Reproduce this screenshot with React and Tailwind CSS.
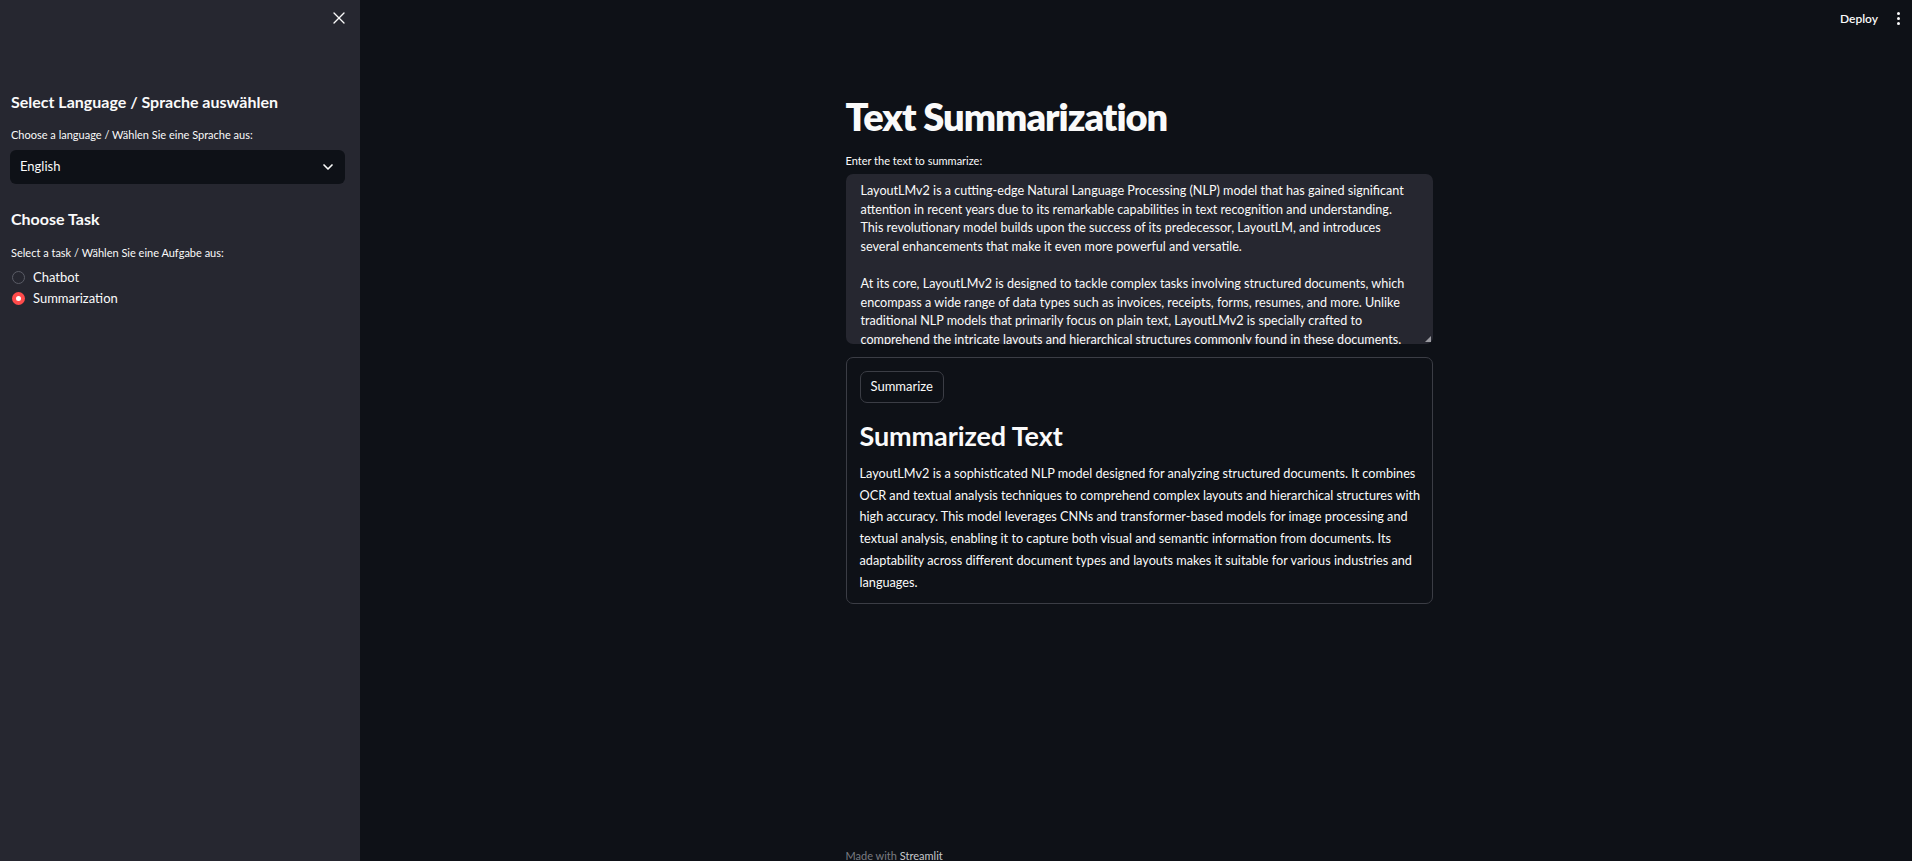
import React from "react";
import { X, ChevronDown } from "lucide-react";

const FONT = { fontFamily: "Lato, 'Noto Sans', sans-serif" };

const inputLines = [
  "LayoutLMv2 is a cutting-edge Natural Language Processing (NLP) model that has gained significant",
  "attention in recent years due to its remarkable capabilities in text recognition and understanding.",
  "This revolutionary model builds upon the success of its predecessor, LayoutLM, and introduces",
  "several enhancements that make it even more powerful and versatile.",
  "",
  "At its core, LayoutLMv2 is designed to tackle complex tasks involving structured documents, which",
  "encompass a wide range of data types such as invoices, receipts, forms, resumes, and more. Unlike",
  "traditional NLP models that primarily focus on plain text, LayoutLMv2 is specially crafted to",
  "comprehend the intricate layouts and hierarchical structures commonly found in these documents.",
];

const summaryLines = [
  "LayoutLMv2 is a sophisticated NLP model designed for analyzing structured documents. It combines",
  "OCR and textual analysis techniques to comprehend complex layouts and hierarchical structures with",
  "high accuracy. This model leverages CNNs and transformer-based models for image processing and",
  "textual analysis, enabling it to capture both visual and semantic information from documents. Its",
  "adaptability across different document types and layouts makes it suitable for various industries and",
  "languages.",
];

function Radio({ checked, label }) {
  return (
    <div className="flex items-center h-[21px]">
      {checked ? (
        <span className="w-[13px] h-[13px] rounded-full bg-[#ff4b4b] flex items-center justify-center ml-[12px]">
          <span className="w-[5px] h-[5px] rounded-full bg-white" />
        </span>
      ) : (
        <span className="w-[13px] h-[13px] rounded-full border border-[#5a5c66] ml-[12px]" />
      )}
      <span className="ml-[8px] text-[13px] text-[#fafafa]">{label}</span>
    </div>
  );
}

export default function App() {
  return (
    <div className="flex w-full h-[861px] overflow-hidden bg-[#0e1117] text-[#fafafa]" style={FONT}>
      {/* Sidebar */}
      <aside className="w-[360px] shrink-0 bg-[#262730] flex flex-col">
        <div className="flex justify-end pt-[8px] pr-[11px]">
          <X size={20} strokeWidth={1.6} color="#fafafa" />
        </div>
        <div className="pl-[10px] pr-[15px] pt-[63px]">
          <h2 className="text-[16px] font-bold leading-[22px] pl-[1px]">Select Language / Sprache auswählen</h2>
          <div className="text-[11px] leading-[15px] mt-[14px] pl-[1px]">Choose a language / Wählen Sie eine Sprache aus:</div>
          <div className="mt-[8px] h-[34px] rounded-[6px] bg-[#0e1117] flex items-center justify-between pl-[10px] pr-[9px]">
            <span className="text-[13px]">English</span>
            <ChevronDown size={16} strokeWidth={2.5} color="#fafafa" />
          </div>
          <h2 className="text-[16px] font-bold leading-[22px] mt-[24px] pl-[1px]">Choose Task</h2>
          <div className="text-[11px] leading-[15px] mt-[15px] pl-[1px]">Select a task / Wählen Sie eine Aufgabe aus:</div>
          <div className="mt-[7px] -ml-[10px] flex flex-col">
            <Radio label="Chatbot" />
            <Radio checked label="Summarization" />
          </div>
        </div>
      </aside>

      {/* Main */}
      <main className="flex-1 relative flex flex-col">
        <header className="h-[37px] flex items-center justify-end pr-[12px] gap-[18px]">
          <span className="text-[12px] font-semibold">Deploy</span>
          <div className="flex flex-col gap-[2px] items-center w-[4px]">
            <span className="w-[3px] h-[3px] rounded-full bg-[#fafafa]" />
            <span className="w-[3px] h-[3px] rounded-full bg-[#fafafa]" />
            <span className="w-[3px] h-[3px] rounded-full bg-[#fafafa]" />
          </div>
        </header>
        <div className="flex-1 flex justify-center pl-[6px]">
          <div className="w-[587px] flex flex-col">
            <h1 className="text-[38px] font-extrabold leading-[48px] mt-[55px] tracking-[-1px]">Text Summarization</h1>
            <div className="text-[11px] leading-[15px] mt-[13px]">Enter the text to summarize:</div>
            <div className="mt-[6px] h-[170px] rounded-[7px] bg-[#262730] relative overflow-hidden">
              <div className="pl-[15px] pt-[8px] text-[12.6px] leading-[18.6px] whitespace-pre">
                {inputLines.map((l, i) => (
                  <div key={i} className="h-[18.6px]">{l}</div>
                ))}
              </div>
              <svg className="absolute right-[2px] bottom-[2px]" width="6" height="6" viewBox="0 0 6 6">
                <path d="M6 0 L6 6 L0 6 Z" fill="#9a9aa0" />
              </svg>
            </div>
            <div className="mt-[13px] border border-[#3b3d45] rounded-[7px] px-[13px] pt-[13px] pb-[10px]">
              <button className="h-[32px] px-[10px] rounded-[7px] border border-[#3b3d45] bg-[#0e1117] text-[13px] text-[#fafafa]">
                Summarize
              </button>
              <h3 className="text-[27px] font-bold leading-[30px] mt-[18px] tracking-[-0.1px]">Summarized Text</h3>
              <div className="mt-[12px] text-[12.7px] leading-[21.7px] whitespace-pre">
                {summaryLines.map((l, i) => (
                  <div key={i}>{l}</div>
                ))}
              </div>
            </div>
            <div className="mt-auto text-[11px] leading-[16px] translate-y-[3px] text-[#7a7c82]">
              Made with <span className="text-[#c8c9cc]">Streamlit</span>
            </div>
          </div>
        </div>
      </main>
    </div>
  );
}
